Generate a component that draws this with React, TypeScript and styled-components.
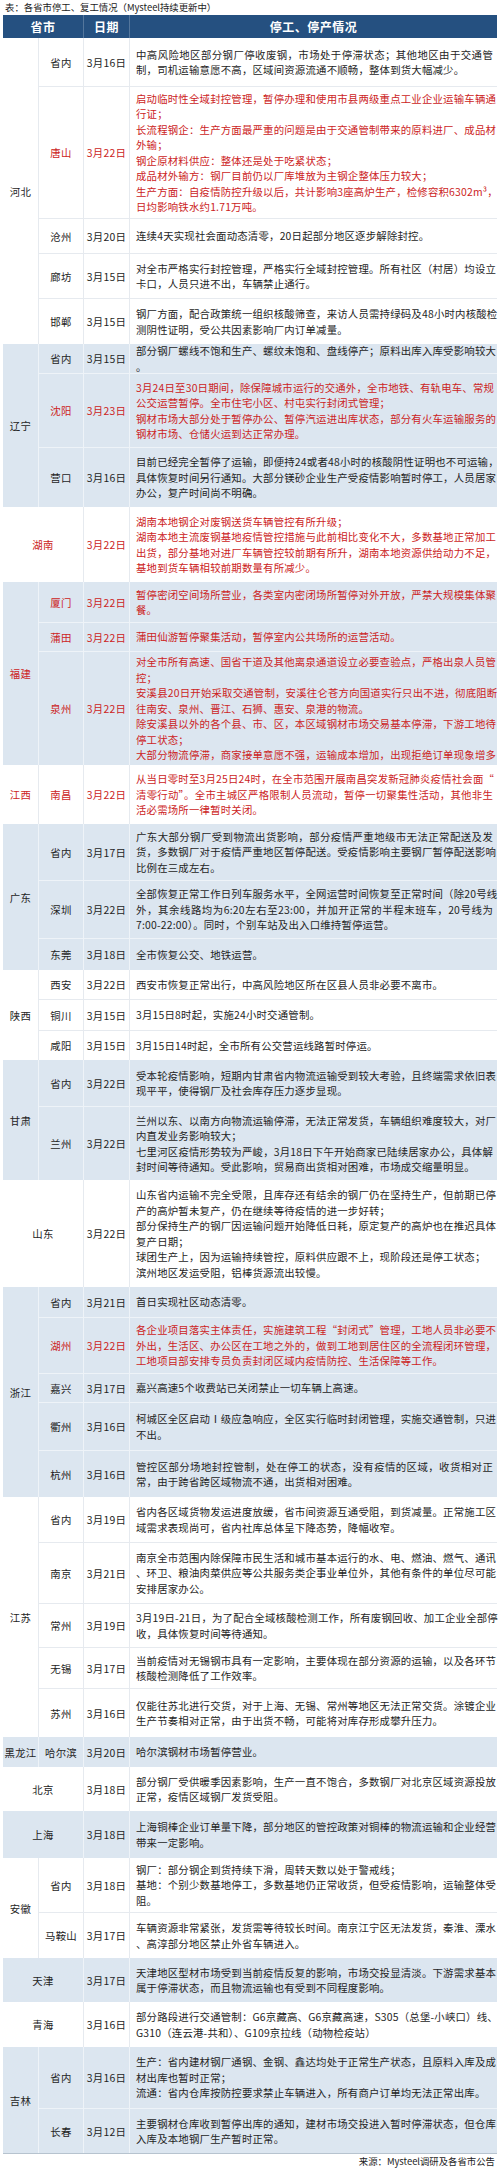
import React from 'react';
import styled, { createGlobalStyle } from 'styled-components';

const GlobalStyle = createGlobalStyle`
  html, body { margin: 0; padding: 0; background: #ffffff; }
  body {
    width: 500px;
    font-family: "Noto Sans CJK SC", "Noto Sans", "Liberation Sans", sans-serif;
    -webkit-font-smoothing: antialiased;
  }
`;

const Page = styled.div`
  width: 500px;
  height: 2169px;
  box-sizing: border-box;
  padding: 0 3px;
  overflow: hidden;
`;

const Title = styled.div`
  height: 15px;
  line-height: 15px;
  font-size: 9.4px;
  color: #1c1c1c;
  padding-left: 2px;
  white-space: nowrap;
`;

const Table = styled.div`
  width: 494px;
  border-bottom: 1px solid #b7c3cf;
`;

const Header = styled.div`
  display: grid;
  grid-template-columns: 80px 46px minmax(0, 1fr);
  height: 23px;
  background: #255080;
  color: #ffffff;
  font-size: 12px;
  font-weight: 700;
`;

const HeadCell = styled.div`
  display: flex;
  align-items: center;
  justify-content: center;
  letter-spacing: 0.5px;
  & + & {
    border-left: 1px solid rgba(255, 255, 255, 0.22);
  }
`;

const Group = styled.div<{ $alt: boolean }>`
  display: grid;
  grid-template-columns: 35px 45px 46px minmax(0, 1fr);
  background: ${(p) => (p.$alt ? '#dce6f0' : '#ffffff')};
  --line: ${(p) => (p.$alt ? '#eef3f8' : '#e6eaef')};
`;

const RED = '#cc2323';
const INK = '#242424';

const ProvinceCell = styled.div<{ $rows: number; $wide: boolean; $red: boolean }>`
  grid-column: ${(p) => (p.$wide ? '1 / span 2' : '1')};
  grid-row: span ${(p) => p.$rows};
  display: flex;
  align-items: center;
  justify-content: center;
  font-size: 10.4px;
  letter-spacing: 0.3px;
  color: ${(p) => (p.$red ? RED : INK)};
  white-space: nowrap;
`;

const CityCell = styled.div<{ $first: boolean; $red: boolean }>`
  grid-column: 2;
  display: flex;
  align-items: center;
  justify-content: center;
  font-size: 10.4px;
  letter-spacing: 0.3px;
  color: ${(p) => (p.$red ? RED : INK)};
  border-left: 1px solid var(--line);
  border-top: ${(p) => (p.$first ? 'none' : '1px solid var(--line)')};
  white-space: nowrap;
`;

const DateCell = styled.div<{ $first: boolean; $red: boolean }>`
  grid-column: 3;
  display: flex;
  align-items: center;
  justify-content: center;
  font-size: 10.4px;
  letter-spacing: 0.3px;
  color: ${(p) => (p.$red ? RED : INK)};
  border-left: 1px solid var(--line);
  border-top: ${(p) => (p.$first ? 'none' : '1px solid var(--line)')};
  white-space: nowrap;
`;

const TextCell = styled.div<{ $first: boolean; $red: boolean; $h: number }>`
  grid-column: 4;
  min-width: 0;
  box-sizing: border-box;
  height: ${(p) => p.$h}px;
  display: flex;
  flex-direction: column;
  justify-content: center;
  padding: 0 2px 0 6px;
  font-size: 10.4px;
  letter-spacing: 0.2px;
  line-height: 15.5px;
  color: ${(p) => (p.$red ? RED : INK)};
  border-left: 1px solid var(--line);
  border-top: ${(p) => (p.$first ? 'none' : '1px solid var(--line)')};
`;

const Line = styled.div<{ $full: boolean }>`
  white-space: nowrap;
  padding-right: ${(p) => (p.$full ? '2px' : '0')};
  text-align: ${(p) => (p.$full ? 'justify' : 'left')};
  text-align-last: ${(p) => (p.$full ? 'justify' : 'left')};
`;

const Source = styled.div`
  height: 15px;
  line-height: 15px;
  text-align: right;
  font-size: 9.4px;
  color: #1c1c1c;
  padding-right: 2px;
`;

type Row = { city?: string; date: string; h: number; red?: boolean; paras: string[][] };
type Prov = { name: string; red?: boolean; wide?: boolean; rows: Row[] };

const DATA: Prov[] = [
  {
    name: '河北',
    rows: [
      {
        city: '省内', date: '3月16日', h: 48,
        paras: [['中高风险地区部分钢厂停收废钢，市场处于停滞状态；其他地区由于交通管', '制，司机运输意愿不高，区域间资源流通不顺畅，整体到货大幅减少。']],
      },
      {
        city: '唐山', date: '3月22日', h: 132, red: true,
        paras: [
          ['启动临时性全域封控管理，暂停办理和使用市县两级重点工业企业运输车辆通', '行证；'],
          ['长流程钢企：生产方面最严重的问题是由于交通管制带来的原料进厂、成品材', '外输；'],
          ['钢企原材料供应：整体还是处于吃紧状态；'],
          ['成品材外输方：钢厂目前仍以厂库堆放为主钢企整体压力较大；'],
          ['生产方面：自疫情防控升级以后，共计影响3座高炉生产，检修容积6302m³，', '日均影响铁水约1.71万吨。'],
        ],
      },
      { city: '沧州', date: '3月20日', h: 35, paras: [['连续4天实现社会面动态清零，20日起部分地区逐步解除封控。']] },
      {
        city: '廊坊', date: '3月15日', h: 45,
        paras: [['对全市严格实行封控管理，严格实行全域封控管理。所有社区（村居）均设立', '卡口，人员只进不出，车辆禁止通行。']],
      },
      {
        city: '邯郸', date: '3月15日', h: 46,
        paras: [['钢厂方面，配合政策统一组织核酸筛查，来访人员需持绿码及48小时内核酸检', '测阴性证明，受公共因素影响厂内订单减量。']],
      },
    ],
  },
  {
    name: '辽宁',
    rows: [
      {
        city: '省内', date: '3月15日', h: 29,
        paras: [['部分钢厂螺线不饱和生产、螺纹未饱和、盘线停产；原料出库入库受影响较大', '。']],
      },
      {
        city: '沈阳', date: '3月23日', h: 74, red: true,
        paras: [
          ['3月24日至30日期间，除保障城市运行的交通外，全市地铁、有轨电车、常规', '公交运营暂停。全市住宅小区、村屯实行封闭式管理；'],
          ['钢材市场大部分处于暂停办公、暂停汽运进出库状态，部分有火车运输服务的', '钢材市场、仓储火运到达正常办理。'],
        ],
      },
      {
        city: '营口', date: '3月16日', h: 60,
        paras: [['目前已经完全暂停了运输，即便持24或者48小时的核酸阴性证明也不可运输，', '具体恢复时间另行通知。大部分镁砂企业生产受疫情影响暂时停工，人员居家', '办公，复产时间尚不明确。']],
      },
    ],
  },
  {
    name: '湖南', red: true, wide: true,
    rows: [
      {
        date: '3月22日', h: 75, red: true,
        paras: [
          ['湖南本地钢企对废钢送货车辆管控有所升级；'],
          ['湖南本地主流废钢基地疫情管控措施与此前相比变化不大，多数基地正常加工', '出货，部分基地对进厂车辆管控较前期有所升，湖南本地资源供给动力不足，', '基地到货车辆相较前期数量有所减少。'],
        ],
      },
    ],
  },
  {
    name: '福建', red: true,
    rows: [
      {
        city: '厦门', date: '3月22日', h: 40, red: true,
        paras: [['暂停密闭空间场所营业，各类室内密闭场所暂停对外开放，严禁大规模集体聚', '餐。']],
      },
      { city: '蒲田', date: '3月22日', h: 29, red: true, paras: [['蒲田仙游暂停聚集活动，暂停室内公共场所的运营活动。']] },
      {
        city: '泉州', date: '3月22日', h: 114, red: true,
        paras: [
          ['对全市所有高速、国省干道及其他离泉通道设立必要查验点，严格出泉人员管', '控；'],
          ['安溪县20日开始采取交通管制，安溪往仑苍方向国道实行只出不进，彻底阻断', '往南安、泉州、晋江、石狮、惠安、泉港的物流。'],
          ['除安溪县以外的各个县、市、区，本区域钢材市场交易基本停滞，下游工地待', '停工状态；'],
          ['大部分物流停滞，商家接单意愿不强，运输成本增加，出现拒绝订单现象增多'],
        ],
      },
    ],
  },
  {
    name: '江西', red: true,
    rows: [
      {
        city: '南昌', date: '3月22日', h: 59, red: true,
        paras: [['从当日零时至3月25日24时，在全市范围开展南昌突发新冠肺炎疫情社会面“', '清零行动”。全市主城区严格限制人员流动，暂停一切聚集性活动，其他非生', '活必需场所一律暂时关闭。']],
      },
    ],
  },
  {
    name: '广东',
    rows: [
      {
        city: '省内', date: '3月17日', h: 56,
        paras: [['广东大部分钢厂受到物流出货影响，部分疫情严重地级市无法正常配送及发', '货，多数钢厂对于疫情严重地区暂停配送。受疫情影响主要钢厂暂停配送影响', '比例在三成左右。']],
      },
      {
        city: '深圳', date: '3月22日', h: 58,
        paras: [['全部恢复正常工作日列车服务水平，全网运营时间恢复至正常时间（除20号线', '外，其余线路均为6:20左右至23:00，并加开正常的半程末班车，20号线为', '7:00-22:00）。同时，个别车站及出入口维持暂停运营。']],
      },
      { city: '东莞', date: '3月18日', h: 32, paras: [['全市恢复公交、地铁运营。']] },
    ],
  },
  {
    name: '陕西',
    rows: [
      { city: '西安', date: '3月22日', h: 29, paras: [['西安市恢复正常出行，中高风险地区所在区县人员非必要不离市。']] },
      { city: '铜川', date: '3月15日', h: 31, paras: [['3月15日8时起，实施24小时交通管制。']] },
      { city: '咸阳', date: '3月15日', h: 30, paras: [['3月15日14时起，全市所有公交营运线路暂时停运。']] },
    ],
  },
  {
    name: '甘肃',
    rows: [
      {
        city: '省内', date: '3月22日', h: 46,
        paras: [['受本轮疫情影响，短期内甘肃省内物流运输受到较大考验，且终端需求依旧表', '现平平，使得钢厂及社会库存压力逐步显现。']],
      },
      {
        city: '兰州', date: '3月22日', h: 74,
        paras: [
          ['兰州以东、以南方向物流运输停滞，无法正常发货，车辆组织难度较大，对厂', '内直发业务影响较大；'],
          ['七里河区疫情形势较为严峻，3月18日下午开始商家已陆续居家办公，具体解', '封时间等待通知。受此影响，贸易商出货相对困难，市场成交缩量明显。'],
        ],
      },
    ],
  },
  {
    name: '山东', wide: true,
    rows: [
      {
        date: '3月22日', h: 107,
        paras: [
          ['山东省内运输不完全受限，且库存还有结余的钢厂仍在坚持生产，但前期已停', '产的高炉暂未复产，仍在继续等待疫情的进一步好转；'],
          ['部分保持生产的钢厂因运输问题开始降低日耗，原定复产的高炉也在推迟具体', '复产日期；'],
          ['球团生产上，因为运输持续管控，原料供应跟不上，现阶段还是停工状态；'],
          ['滨州地区发运受阻，铝棒货源流出较慢。'],
        ],
      },
    ],
  },
  {
    name: '浙江',
    rows: [
      { city: '省内', date: '3月21日', h: 30, paras: [['首日实现社区动态清零。']] },
      {
        city: '湖州', date: '3月22日', h: 56, red: true,
        paras: [['各企业项目落实主体责任，实施建筑工程“封闭式”管理，工地人员非必要不', '外出，生活区、办公区在工地之外的，做到工地到居住区的全流程闭环管理，', '工地项目部安排专员负责封闭区域内疫情防控、生活保障等工作。']],
      },
      { city: '嘉兴', date: '3月17日', h: 29, paras: [['嘉兴高速5个收费站已关闭禁止一切车辆上高速。']] },
      {
        city: '衢州', date: '3月16日', h: 48,
        paras: [['柯城区全区启动Ⅰ级应急响应，全区实行临时封闭管理，实施交通管制，只进', '不出。']],
      },
      {
        city: '杭州', date: '3月16日', h: 47,
        paras: [['管控区部分场地封控管制，处在停工的状态，没有疫情的区域，收货相对正', '常，由于跨省跨区域物流不通，出货相对困难。']],
      },
    ],
  },
  {
    name: '江苏',
    rows: [
      {
        city: '省内', date: '3月19日', h: 45,
        paras: [['省内各区域货物发运进度放缓，省市间资源互通受阻，到货减量。正常施工区', '域需求表现尚可，省内社库总体呈下降态势，降幅收窄。']],
      },
      {
        city: '南京', date: '3月21日', h: 61,
        paras: [['南京全市范围内除保障市民生活和城市基本运行的水、电、燃油、燃气、通讯', '、环卫、粮油肉菜供应等公共服务类企事业单位外，其他有条件的单位尽可能', '安排居家办公。']],
      },
      {
        city: '常州', date: '3月19日', h: 44,
        paras: [['3月19日-21日，为了配合全域核酸检测工作，所有废钢回收、加工企业全部停', '收，具体恢复时间等待通知。']],
      },
      {
        city: '无锡', date: '3月17日', h: 41,
        paras: [['当前疫情对无锡钢市具有一定影响，主要体现在部分资源的运输，以及各环节', '核酸检测降低了工作效率。']],
      },
      {
        city: '苏州', date: '3月16日', h: 49,
        paras: [['仅能往苏北进行交货，对于上海、无锡、常州等地区无法正常交货。涂镀企业', '生产节奏相对正常，由于出货不畅，可能将对库存形成攀升压力。']],
      },
    ],
  },
  {
    name: '黑龙江',
    rows: [{ city: '哈尔滨', date: '3月20日', h: 30, paras: [['哈尔滨钢材市场暂停营业。']] }],
  },
  {
    name: '北京', wide: true,
    rows: [
      {
        date: '3月18日', h: 44,
        paras: [['部分钢厂受供暖季因素影响，生产一直不饱合，多数钢厂对北京区域资源投放', '正常，疫情区域钢厂发货受阻。']],
      },
    ],
  },
  {
    name: '上海', wide: true,
    rows: [
      {
        date: '3月18日', h: 47,
        paras: [['上海铜棒企业订单量下降，部分地区的管控政策对铜棒的物流运输和企业经营', '带来一定影响。']],
      },
    ],
  },
  {
    name: '安徽',
    rows: [
      {
        city: '省内', date: '3月18日', h: 54,
        paras: [
          ['钢厂：部分钢企到货持续下滑，周转天数以处于警戒线；'],
          ['基地：个别少数基地停工，多数基地仍正常收货，但受疫情影响，运输整体受', '阻。'],
        ],
      },
      {
        city: '马鞍山', date: '3月17日', h: 46,
        paras: [['车辆资源非常紧张，发货需等待较长时间。南京江宁区无法发货，秦淮、溧水', '、高淳部分地区禁止外省车辆进入。']],
      },
    ],
  },
  {
    name: '天津', wide: true,
    rows: [
      {
        date: '3月17日', h: 44,
        paras: [['天津地区型材市场受到当前疫情反复的影响，市场交投显清淡。下游需求基本', '属于停滞状态，而且物流运输也有受到不同程度影响。']],
      },
    ],
  },
  {
    name: '青海', wide: true,
    rows: [
      {
        date: '3月16日', h: 45,
        paras: [['部分路段进行交通管制：G6京藏高、G6京藏高速，S305（总堡-小峡口）线、', 'G310（连云港-共和）、G109京拉线（动物检疫站）']],
      },
    ],
  },
  {
    name: '吉林',
    rows: [
      {
        city: '省内', date: '3月16日', h: 61,
        paras: [
          ['生产：省内建材钢厂通钢、金钢、鑫达均处于正常生产状态，且原料入库及成', '材出库也暂时正常；'],
          ['流通：省内仓库按防控要求禁止车辆进入，所有商户订单均无法正常出库。'],
        ],
      },
      {
        city: '长春', date: '3月12日', h: 45,
        paras: [['主要钢材仓库收到暂停出库的通知，建材市场交投进入暂时停滞状态，但仓库', '入库及本地钢厂生产暂时正常。']],
      },
    ],
  },
];

function ProvinceGroup({ prov, alt }: { prov: Prov; alt: boolean }) {
  const wide = !!prov.wide;
  return (
    <Group $alt={alt}>
      <ProvinceCell $rows={prov.rows.length} $wide={wide} $red={!!prov.red}>
        {prov.name}
      </ProvinceCell>
      {prov.rows.map((row, i) => {
        const first = i === 0;
        const red = !!row.red;
        return (
          <React.Fragment key={i}>
            {!wide && (
              <CityCell $first={first} $red={red}>
                {row.city}
              </CityCell>
            )}
            <DateCell $first={first} $red={red}>
              {row.date}
            </DateCell>
            <TextCell $first={first} $red={red} $h={row.h}>
              {row.paras.map((para, pi) =>
                para.map((ln, li) => (
                  <Line key={`${pi}-${li}`} $full={li < para.length - 1}>
                    {ln}
                  </Line>
                ))
              )}
            </TextCell>
          </React.Fragment>
        );
      })}
    </Group>
  );
}

export default function App() {
  return (
    <>
      <GlobalStyle />
      <Page>
        <Title>表：各省市停工、复工情况（Mysteel持续更新中）</Title>
        <Table>
          <Header>
            <HeadCell>省市</HeadCell>
            <HeadCell>日期</HeadCell>
            <HeadCell>停工、停产情况</HeadCell>
          </Header>
          {DATA.map((prov, i) => (
            <ProvinceGroup key={prov.name} prov={prov} alt={i % 2 === 1} />
          ))}
        </Table>
        <Source>来源：Mysteel调研及各省市公告</Source>
      </Page>
    </>
  );
}
